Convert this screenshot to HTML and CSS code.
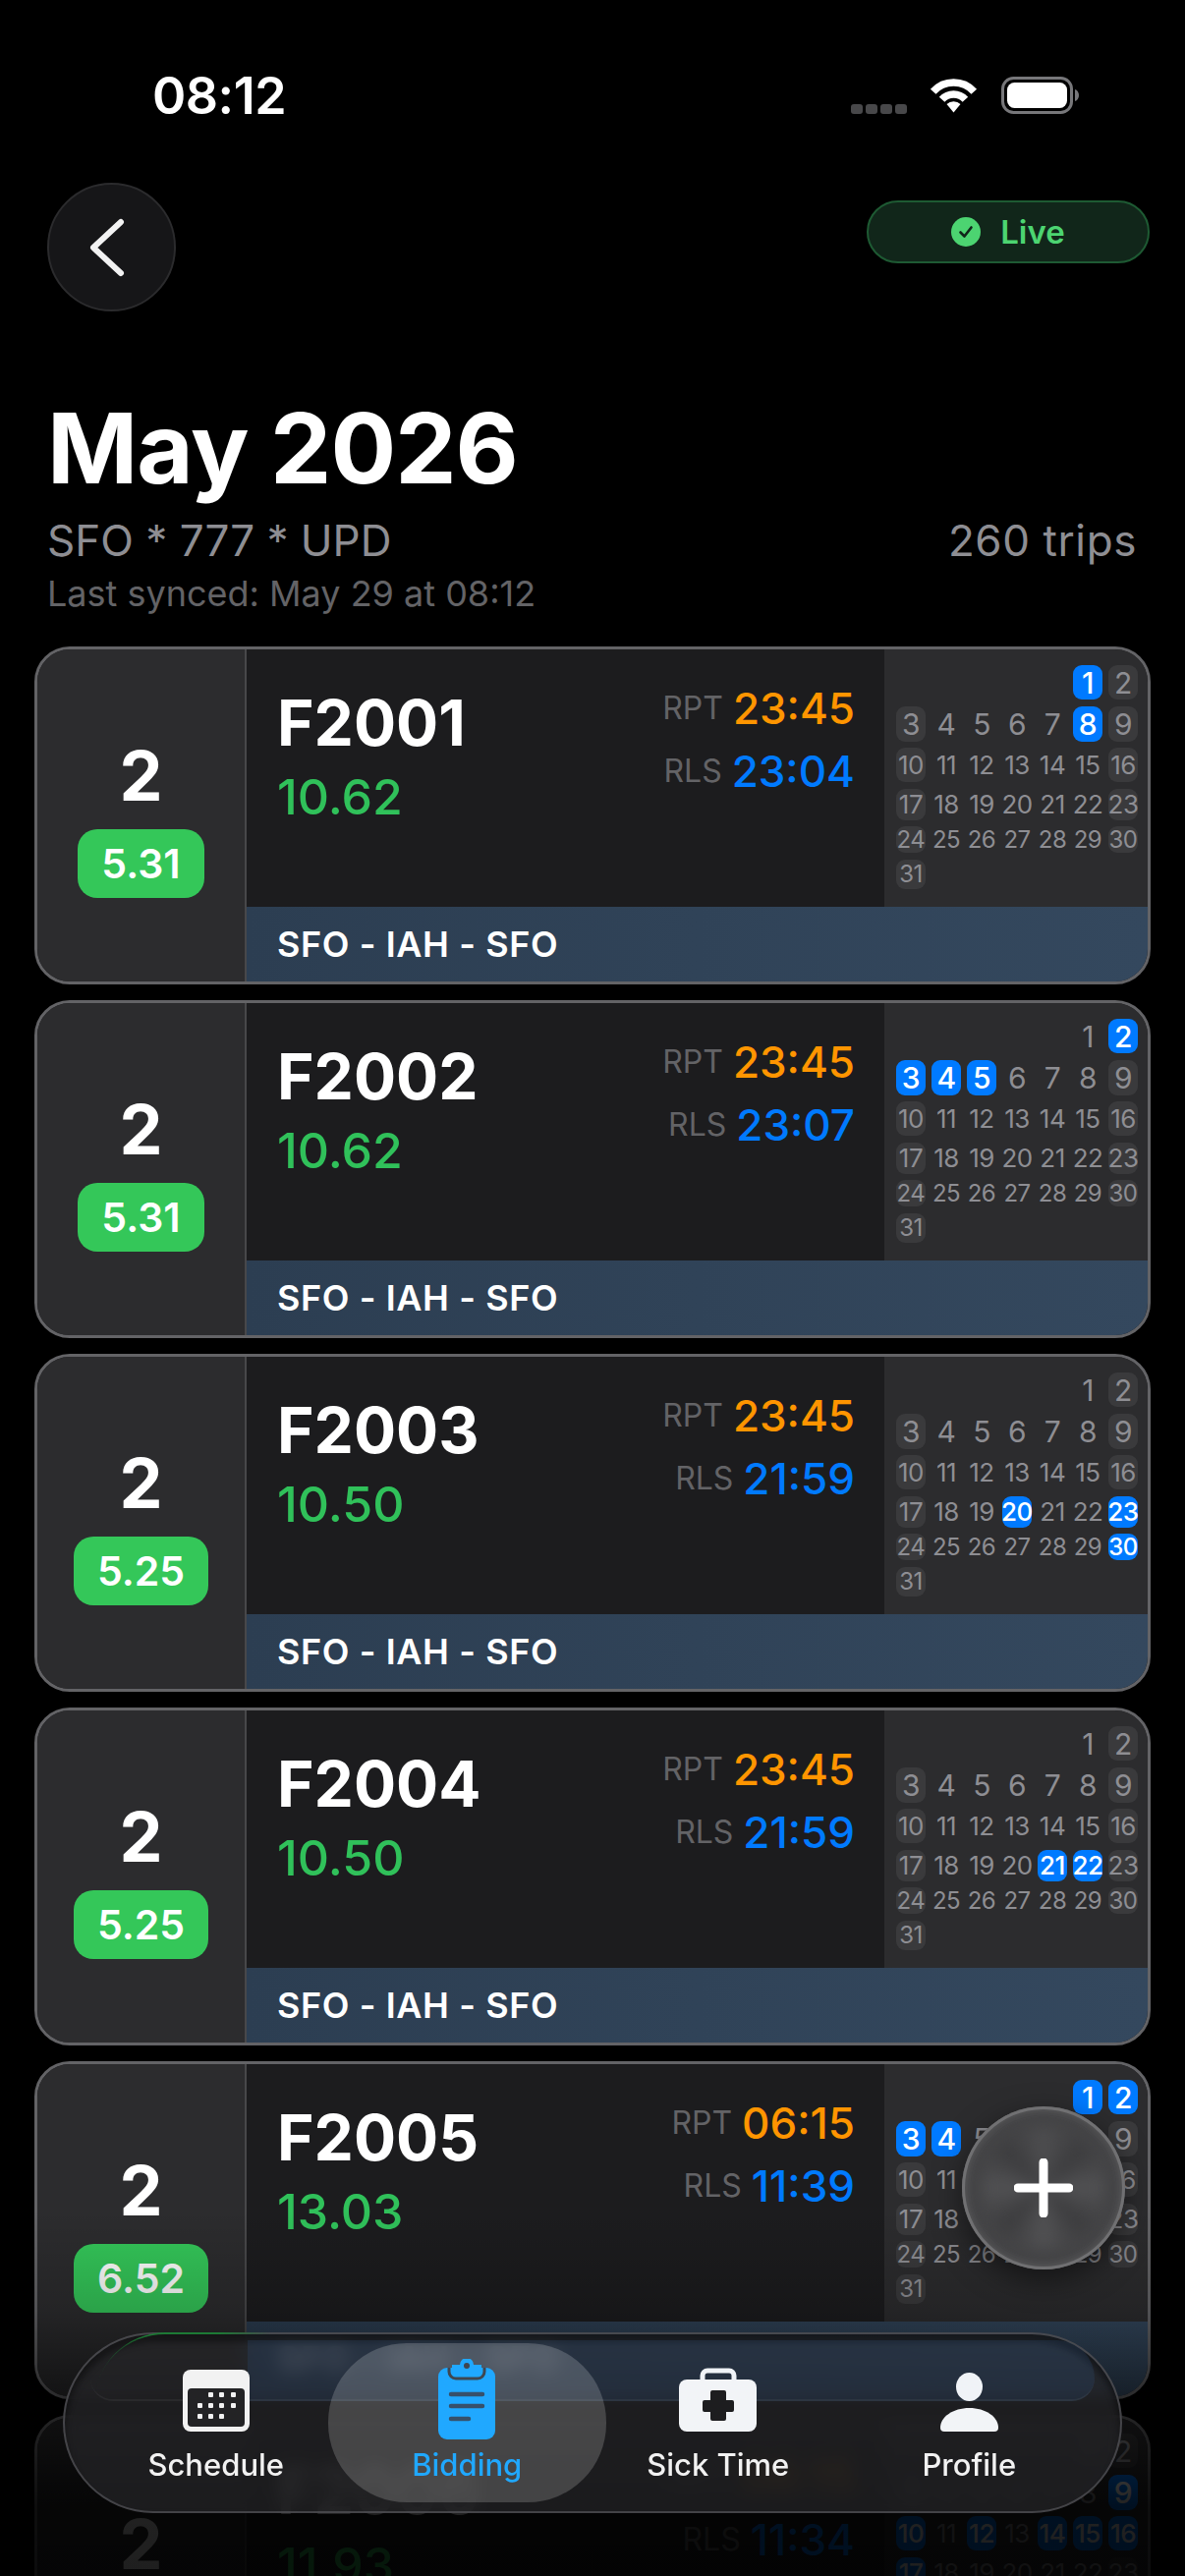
FILE: index.html
```html
<!DOCTYPE html>
<html lang="en">

<head>
    <meta charset="UTF-8">
    <meta name="viewport" content="width=device-width, initial-scale=1.0">
    <title>May 2026 Bidding</title>
    <link rel="stylesheet" href="styles.css">
</head>

<body>
    <div class="phone">
        <div class="status">
            <span class="clock">08:12</span>
            <div class="status-icons">
                <div class="signal"><span></span><span></span><span></span><span></span></div>
                <svg class="wifi" width="51" height="37" viewBox="0 0 51 37">
                    <path d="M4.7 15.3a28 28 0 0 1 41.6 0M13.6 23.3a16 16 0 0 1 23.8 0" fill="none" stroke="#fff" stroke-width="7.5"/>
                    <path d="M25.5 36.5 18.5 28a10 10 0 0 1 14 0z" fill="#fff"/>
                </svg>
                <svg class="battery" width="79" height="38" viewBox="0 0 79 38">
                    <rect x="1.5" y="1.5" width="70" height="35" rx="11" fill="none" stroke="#77777a" stroke-width="3"/>
                    <rect x="6" y="6" width="61" height="26" rx="7.5" fill="#fff"/>
                    <path d="M75 13c2.5.8 4 3 4 6s-1.500 5.200-4 6z" fill="#77777a"/>
                </svg>
            </div>
        </div>

        <div class="topbar">
            <div class="back">
                <svg width="40" height="60" viewBox="0 0 40 60">
                    <path d="M34 4 6 30l28 26" fill="none" stroke="#f2f2f2" stroke-width="6" stroke-linecap="round" stroke-linejoin="round"/>
                </svg>
            </div>
            <div class="live">
                <svg width="30" height="30" viewBox="0 0 30 30">
                    <circle cx="15" cy="15" r="15" fill="#4cd471"/>
                    <path d="M9.500 15.500l4 4 7-9" fill="none" stroke="#10261a" stroke-width="2.600" stroke-linecap="round" stroke-linejoin="round"/>
                </svg>
                <span>Live</span>
            </div>
        </div>

        <div class="heading">
            <h1>May 2026</h1>
            <div class="subrow">
                <span>SFO * 777 * UPD</span>
                <span class="count">260 trips</span>
            </div>
            <div class="synced">Last synced: May 29 at 08:12</div>
        </div>

        <div class="cards" id="cards"></div>

        <div class="fade"></div>

        <div class="fab">
            <svg width="60" height="60" viewBox="0 0 60 60">
                <path d="M30 4v52M4 30h52" stroke="#fff" stroke-width="9" stroke-linecap="round"/>
            </svg>
        </div>

        <nav class="tabbar">
            <div class="tab">
                <svg width="68" height="63" viewBox="0 0 68 63">
                    <rect width="68" height="63" rx="8" fill="#f2f2f2"/>
                    <rect x="5" y="19" width="58" height="39" rx="4" fill="#232325"/>
                    <g fill="#f2f2f2">
                        <rect x="26" y="23" width="5" height="5" rx="1"/><rect x="37" y="23" width="5" height="5" rx="1"/><rect x="49" y="23" width="5" height="5" rx="1"/>
                        <rect x="15" y="34" width="5" height="5" rx="1"/><rect x="26" y="34" width="5" height="5" rx="1"/><rect x="37" y="34" width="5" height="5" rx="1"/><rect x="49" y="34" width="5" height="5" rx="1"/>
                        <rect x="15" y="45" width="5" height="5" rx="1"/><rect x="26" y="45" width="5" height="5" rx="1"/><rect x="37" y="45" width="5" height="5" rx="1"/>
                    </g>
                </svg>
                <span>Schedule</span>
            </div>
            <div class="tab active">
                <svg width="58" height="82" viewBox="0 0 58 82">
                    <rect y="9" width="58" height="73" rx="9" fill="#20a8ff"/>
                    <path d="M11 9v4a7 7 0 0 0 7 7h22a7 7 0 0 0 7-7V9" fill="none" stroke="#3f4650" stroke-width="3"/>
                    <path d="M14 6h8a7 7 0 0 1 14 0h8v7a4 4 0 0 1-4 4H18a4 4 0 0 1-4-4z" fill="#20a8ff"/>
                    <circle cx="29" cy="7" r="3" fill="#3f4650"/>
                    <path d="M13 36h32M13 48h32M13 61h18" stroke="#37506a" stroke-width="4.500" stroke-linecap="round"/>
                </svg>
                <span>Bidding</span>
            </div>
            <div class="tab">
                <svg width="79" height="65" viewBox="0 0 79 65">
                    <path d="M24 14V8a5 5 0 0 1 5-5h22a5 5 0 0 1 5 5v6" fill="none" stroke="#f0f3f7" stroke-width="5"/>
                    <rect y="12" width="79" height="53" rx="8" fill="#f2f4f7"/>
                    <path d="M34 23h12a2 2 0 0 1 2 2v8h6a2 2 0 0 1 2 2v8a2 2 0 0 1-2 2h-6v7a2 2 0 0 1-2 2H34a2 2 0 0 1-2-2v-7h-6a2 2 0 0 1-2-2v-8a2 2 0 0 1 2-2h6v-8a2 2 0 0 1 2-2z" fill="#1d1d1f"/>
                </svg>
                <span>Sick Time</span>
            </div>
            <div class="tab">
                <svg width="59" height="60" viewBox="0 0 59 60">
                    <ellipse cx="29.500" cy="14.500" rx="13.500" ry="14.500" fill="#f0f3f7"/>
                    <path d="M4 60h51q4 0 4-4C59 45 46 36 29.500 36S0 45 0 56q0 4 4 4z" fill="#f2f4f7"/>
                </svg>
                <span>Profile</span>
            </div>
        </nav>
    </div>

    <script src="script.js"></script>
</body>

</html>
```

FILE: styles.css
```css
* {
    box-sizing: border-box;
}

body {
    margin: 0;
    background: #000;
    font-family: Inter, "Liberation Sans", sans-serif;
    color: #fff;
}

.phone {
    position: relative;
    width: 1206px;
    height: 2622px;
    overflow: hidden;
    background: #000;
}

/* status bar */
.status {
    display: flex;
    justify-content: space-between;
    height: 123px;
    padding: 72px 108px 0 155px;
}

.clock {
    font-size: 52px;
    line-height: 52px;
    font-weight: 600;
    letter-spacing: -0.5px;
}

.status-icons {
    display: flex;
    align-items: flex-start;
    height: 38px;
    margin-top: 6px;
}

.signal {
    display: flex;
    gap: 3px;
    margin: 28px 22px 0 0;
}

.signal span {
    width: 12px;
    height: 10px;
    border-radius: 3px;
    background: #48484a;
}

.wifi {
    margin-right: 23px;
}

/* back + live */
.topbar {
    display: flex;
    justify-content: space-between;
    align-items: flex-start;
    margin-top: 63px;
    padding: 0 36px 0 48px;
}

.back {
    display: flex;
    align-items: center;
    justify-content: center;
    width: 131px;
    height: 131px;
    padding-right: 9px;
    border-radius: 50%;
    background: #161618;
    border: 2px solid #2b2b2d;
}

.live {
    display: flex;
    align-items: center;
    justify-content: center;
    gap: 20px;
    width: 288px;
    height: 64px;
    margin-top: 18px;
    border-radius: 32px;
    background: #11261a;
    border: 2px solid #1e5a33;
    color: #4cd471;
    font-size: 33px;
    font-weight: 600;
}

/* heading */
.heading {
    padding: 90px 49px 0 48px;
}

h1 {
    margin: 0;
    font-size: 99px;
    line-height: 99px;
    font-weight: 700;
    letter-spacing: -1px;
}

.subrow {
    display: flex;
    justify-content: space-between;
    margin-top: 22px;
    font-size: 44px;
    line-height: 44px;
    color: #8e8e93;
}

.count {
    letter-spacing: 0.6px;
}

.synced {
    margin-top: 14px;
    font-size: 36px;
    line-height: 36px;
    color: #636366;
}

/* trip cards */
.cards {
    display: flex;
    flex-direction: column;
    gap: 16px;
    margin-top: 36px;
    padding: 0 35px;
}

.card {
    flex: none;
    display: grid;
    grid-template-columns: 213px 1fr 268px;
    grid-template-rows: 1fr 76px;
    height: 344px;
    border: 3px solid #636366;
    border-radius: 36px;
    overflow: hidden;
    background: #1c1c1e;
}

.side {
    grid-row: 1 / 3;
    display: flex;
    flex-direction: column;
    align-items: center;
    justify-content: center;
    gap: 19px;
    padding-top: 9px;
    background: #2c2c2e;
    border-right: 2px solid #48484a;
}

.side b {
    font-size: 70px;
    line-height: 70px;
    font-weight: 700;
}

.badge {
    display: flex;
    align-items: center;
    justify-content: center;
    height: 70px;
    padding: 0 24px;
    border-radius: 20px;
    background: #34c759;
    font-size: 41px;
    font-weight: 600;
}

.main {
    display: flex;
    justify-content: space-between;
    padding: 0 30px 0 31px;
}

.trip {
    padding-top: 43px;
}

.trip h3 {
    margin: 0;
    font-size: 64px;
    line-height: 64px;
    font-weight: 700;
}

.trip p {
    margin: 18px 0 0;
    font-size: 50px;
    line-height: 50px;
    font-weight: 500;
    color: #30c15a;
}

.times {
    display: flex;
    flex-direction: column;
    align-items: flex-end;
    gap: 20px;
    padding-top: 38px;
}

.time {
    display: flex;
    align-items: center;
    gap: 10px;
    font-size: 32px;
    line-height: 44px;
    color: #636366;
}

.time b {
    font-size: 44px;
    font-weight: 500;
}

.rpt b {
    color: #ff9500;
}

.rls b {
    color: #007aff;
}

/* month grid */
.month {
    display: grid;
    grid-template-columns: repeat(7, 30px);
    grid-template-rows: 35px 36px 35px 32px 27px 30px;
    gap: 6.500px 6px;
    padding: 16px 0 0 12px;
    background: #2c2c2e;
    color: #8e8e93;
}

.day {
    display: flex;
    align-items: center;
    justify-content: center;
    border-radius: 9px;
    letter-spacing: -0.5px;
    white-space: nowrap;
}

.r1, .r2 { font-size: 30px; }
.r3, .r4 { font-size: 26px; }
.r5, .r6 { font-size: 24px; }

.wknd {
    background: #3a3a3c;
}

.on {
    background: #007aff;
    color: #fff;
    font-weight: 500;
}

.route {
    grid-column: 2 / 4;
    padding-left: 31px;
    background: linear-gradient(to right, #2c3e52, #34485e);
    font-size: 36px;
    line-height: 76px;
    font-weight: 600;
    letter-spacing: 0.6px;
}

/* bottom fade over the list */
.fade {
    position: absolute;
    left: 0;
    right: 0;
    bottom: 0;
    height: 372px;
    background: linear-gradient(to bottom, rgba(0, 0, 0, 0) 0%, rgba(0, 0, 0, 0.18) 27%, rgba(0, 0, 0, 0.62) 54%, rgba(0, 0, 0, 0.87) 81%, rgba(0, 0, 0, 0.88) 100%);
}

.fab {
    position: absolute;
    left: 979px;
    top: 2144px;
    display: flex;
    align-items: center;
    justify-content: center;
    width: 166px;
    height: 166px;
    border-radius: 50%;
    background: #444446;
    box-shadow: 0 10px 30px rgba(0, 0, 0, 0.5), inset 0 0 0 3px #707072, inset 0 0 10px 4px rgba(255, 255, 255, 0.12);
}

.fab::before {
    content: "";
    position: absolute;
    inset: 22px;
    border-radius: 50%;
    background: conic-gradient(#4e4e50, #3c3c3e, #525254, #3c3c3e, #525254, #3c3c3e, #525254, #3c3c3e, #4e4e50);
    filter: blur(7px);
}

.fab svg {
    position: relative;
}

.tabbar {
    position: absolute;
    left: 64px;
    top: 2374px;
    display: grid;
    grid-template-columns: repeat(4, 1fr);
    width: 1078px;
    height: 184px;
    padding: 0 26px;
    border-radius: 92px;
    border: 2px solid rgba(95, 95, 100, 0.6);
    background: rgba(40, 40, 42, 0.66);
    backdrop-filter: blur(9px);
    box-shadow: inset 0 8px 6px rgba(0, 0, 0, 0.4);
}

/* the route bar showing through the glass, with its refraction line */
.tabbar::before {
    content: "";
    position: absolute;
    top: 6px;
    left: 26px;
    right: 26px;
    height: 60px;
    border-radius: 60px 60px 36px 36px;
    border-bottom: 2px solid rgba(255, 255, 255, 0.05);
    background: linear-gradient(to right, transparent 160px, rgba(50, 90, 140, 0.2) 160px);
}

/* green edge picked up from the badge above */
.tabbar::after {
    content: "";
    position: absolute;
    top: -2px;
    left: 30px;
    width: 180px;
    height: 70px;
    border-top: 2px solid #1d7a35;
    border-radius: 92px 0 0 0;
    -webkit-mask-image: linear-gradient(to right, transparent, #000 30%, #000 70%, transparent);
    mask-image: linear-gradient(to right, transparent, #000 30%, #000 70%, transparent);
}

.tab {
    display: flex;
    flex-direction: column;
    align-items: center;
    justify-content: flex-end;
    gap: 16px;
    padding-bottom: 29px;
    font-size: 31px;
    line-height: 36px;
    font-weight: 500;
    color: #f2f2f2;
    z-index: 1;
}

.tab.active {
    margin: 9px -14px;
    padding-bottom: 20px;
    gap: 8px;
    border-radius: 80px;
    background: rgba(255, 255, 255, 0.18);
    color: #20a8ff;
}
```

FILE: script.js
```js
const trips = [
    { id: 'F2001', pay: '10.62', credit: '5.31', rpt: '23:45', rls: '23:04', on: [1, 8] },
    { id: 'F2002', pay: '10.62', credit: '5.31', rpt: '23:45', rls: '23:07', on: [2, 3, 4, 5] },
    { id: 'F2003', pay: '10.50', credit: '5.25', rpt: '23:45', rls: '21:59', on: [20, 23, 30] },
    { id: 'F2004', pay: '10.50', credit: '5.25', rpt: '23:45', rls: '21:59', on: [21, 22] },
    { id: 'F2005', pay: '13.03', credit: '6.52', rpt: '06:15', rls: '11:39', on: [1, 2, 3, 4] },
    { id: 'F2006', pay: '11.93', credit: '5.97', rpt: '06:15', rls: '11:34', on: [9, 10, 12, 14, 15, 16, 17] }
];

function monthCells(on) {
    let html = '<i></i><i></i><i></i><i></i><i></i>';
    for (let d = 1; d <= 31; d++) {
        // May 2026 starts on col 6, so the rows are offset by 5
        const pos = d + 4;
        const row = Math.floor(pos / 7) + 1;
        const col = pos % 7;
        let cls = 'day r' + row;
        if (on.includes(d)) cls += ' on';
        else if (col === 0 || col === 6) cls += ' wknd';
        html += `<span class="${cls}">${d}</span>`;
    }
    return html;
}

document.getElementById('cards').innerHTML = trips.map(t => `
    <div class="card">
        <div class="side"><b>2</b><span class="badge">${t.credit}</span></div>
        <div class="main">
            <div class="trip"><h3>${t.id}</h3><p>${t.pay}</p></div>
            <div class="times">
                <div class="time rpt">RPT <b>${t.rpt}</b></div>
                <div class="time rls">RLS <b>${t.rls}</b></div>
            </div>
        </div>
        <div class="month">${monthCells(t.on)}</div>
        <div class="route">SFO - IAH - SFO</div>
    </div>`).join('');
```
